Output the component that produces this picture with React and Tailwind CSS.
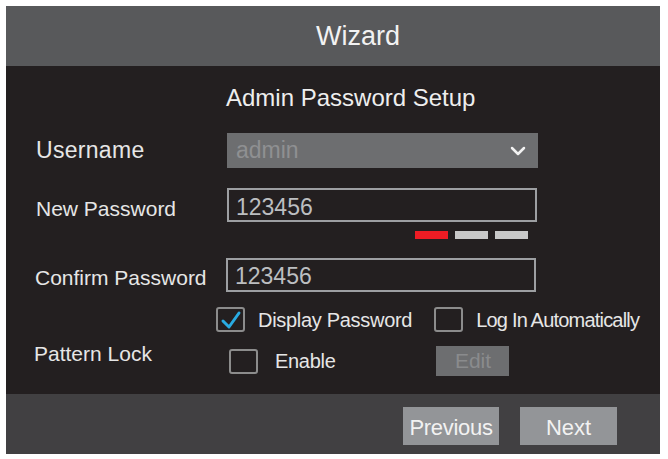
import React from "react";

function Check({ checked }) {
  return (
    <div className="w-[29px] h-[25px] border-2 border-[#8c8c8c] rounded-[3px] flex items-center justify-center shrink-0">
      {checked && (
        <svg width="22" height="20" viewBox="0 0 22 20">
          <path d="M3 11 L9 17 L19 3" fill="none" stroke="#29abe2" strokeWidth="3" strokeLinecap="round" strokeLinejoin="round" />
        </svg>
      )}
    </div>
  );
}

export default function App() {
  return (
    <div className="w-[668px] h-[459px] bg-white pt-[6px] pl-[6px] text-[#e6e6e6]" style={{ fontFamily: '"Liberation Sans", Arial, sans-serif' }}>
      <div className="w-[654px] flex flex-col">
        <div className="h-[60px] bg-[#58595b] flex items-center pl-[310px]">
          <span className="text-[27px] leading-none text-[#f2f2f2]">Wizard</span>
        </div>
        <div className="h-[328px] bg-[#231f20] flex flex-col">
          <div className="mt-[20px] h-[24px] pl-[220px] text-[24px] leading-[24px] text-[#eeeeee]">Admin Password Setup</div>

          <div className="mt-[23px] h-[35px] flex items-center">
            <div className="w-[221px] pl-[30px] text-[23px] tracking-[0.3px]">Username</div>
            <div className="w-[311px] h-[35px] bg-[#6d6e70] flex items-center justify-between pl-[9px] pr-[12px]">
              <span className="text-[23px] text-[#8f9092]">admin</span>
              <svg width="16" height="10" viewBox="0 0 16 10">
                <path d="M2 2 L8 8 L14 2" fill="none" stroke="#f2f2f2" strokeWidth="2.5" strokeLinecap="round" strokeLinejoin="round" />
              </svg>
            </div>
          </div>

          <div className="mt-[20px] h-[34px] flex items-center">
            <div className="w-[221px] pl-[30px] pt-[8px] text-[21px]">New Password</div>
            <div className="w-[310px] h-[34px] border-2 border-[#9d9fa2] flex items-center pl-[7px] pt-[4px]">
              <span className="text-[23px] text-[#bcbec0]">123456</span>
            </div>
          </div>

          <div className="mt-[9px] h-[8px] flex pl-[409px] gap-[7px]">
            <div className="w-[33px] h-[8px] bg-[#ed1c24]"></div>
            <div className="w-[33px] h-[8px] bg-[#c8c8c8]"></div>
            <div className="w-[33px] h-[8px] bg-[#c8c8c8]"></div>
          </div>

          <div className="mt-[19px] h-[34px] flex items-center">
            <div className="w-[220px] pl-[29px] pt-[6px] text-[21px]">Confirm Password</div>
            <div className="w-[310px] h-[34px] border-2 border-[#9d9fa2] flex items-center pl-[7px] pt-[2px]">
              <span className="text-[23px] text-[#bcbec0]">123456</span>
            </div>
          </div>

          <div className="mt-[15px] h-[25px] flex items-center pl-[210px]">
            <Check checked />
            <span className="ml-[13px] text-[20px] tracking-[-0.3px]">Display Password</span>
            <div className="ml-[22px]"><Check /></div>
            <span className="ml-[13px] text-[20px] tracking-[-0.8px]">Log In Automatically</span>
          </div>

          <div className="mt-[14px] h-[30px] flex items-center">
            <div className="w-[223px] pl-[28px] text-[21px] -mt-[14px]">Pattern Lock</div>
            <Check />
            <span className="ml-[17px] text-[20px] tracking-[-0.3px]">Enable</span>
            <div className="ml-[101px] w-[73px] h-[30px] bg-[#6d6e70] flex items-center justify-center text-[21px] text-[#8a8b8d]">Edit</div>
          </div>
        </div>
        <div className="h-[60px] bg-[#414042] flex items-start pt-[13px] pl-[397px] gap-[21px]">
          <div className="w-[96px] h-[38px] bg-[#939598] flex items-center justify-center pt-[3px] text-[22px] tracking-[-0.3px] text-[#f2f2f2]">Previous</div>
          <div className="w-[97px] h-[38px] bg-[#939598] flex items-center justify-center pt-[3px] text-[22px] text-[#f2f2f2]">Next</div>
        </div>
      </div>
    </div>
  );
}
